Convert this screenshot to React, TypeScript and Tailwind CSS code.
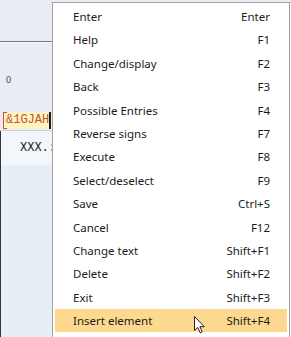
import React from "react";

const items: [string, string][] = [
  ["Enter", "Enter"],
  ["Help", "F1"],
  ["Change/display", "F2"],
  ["Back", "F3"],
  ["Possible Entries", "F4"],
  ["Reverse signs", "F7"],
  ["Execute", "F8"],
  ["Select/deselect", "F9"],
  ["Save", "Ctrl+S"],
  ["Cancel", "F12"],
  ["Change text", "Shift+F1"],
  ["Delete", "Shift+F2"],
  ["Exit", "Shift+F3"],
  ["Insert element", "Shift+F4"],
];

export default function App() {
  return (
    <div className="relative w-[291px] h-[337px] overflow-hidden bg-[#e9eef5]" style={{ fontFamily: '"Noto Sans", "Open Sans", sans-serif' }}>
      {/* left background content */}
      <div className="flex flex-col w-[53px] h-full">
        <div className="h-[41px] bg-[#e8edf4]" />
        <div className="h-px bg-[#737a82]" />
        <div className="h-px bg-[#f8fafc]" />
        <div className="h-[42px] flex items-end pl-[6px]">
          <span className="text-[9px] leading-[10px] text-[#444]">0</span>
        </div>
        <div className="h-[25px]" />
        <div className="relative h-[20px] flex items-center pl-[3px]">
          <div className="relative h-[17px] flex-1 bg-[#fff3c4] flex items-center pl-[3px] overflow-hidden">
            <div className="absolute left-0 top-0 bottom-0 w-px bg-[#d0503a]" />
            <div className="absolute left-0 top-0 w-[4px] h-px bg-[#d0503a]" />
            <div className="absolute left-0 bottom-0 w-[4px] h-px bg-[#d0503a]" />
            <span className="text-[12px] leading-[14px] text-[#c0562c] whitespace-nowrap" style={{ fontFamily: '"Liberation Mono", monospace' }}>&amp;1GJAH</span>
            <div className="absolute left-[46px] top-0 bottom-0 w-[2px] bg-[#1a1a2a]" />
          </div>
        </div>
        <div className="h-px bg-[#c9d1da]" />
        <div className="h-[34px] bg-[#f3f6fa] border-l border-[#2d3a45] flex items-center pl-[19px]">
          <span className="text-[12px] leading-[14px] text-[#222] whitespace-nowrap" style={{ fontFamily: '"Liberation Mono", monospace' }}>XXX.:</span>
        </div>
        <div className="flex-1 border-l border-[#2d3a45] bg-[#e8eef6]" />
      </div>

      {/* context menu */}
      <div className="absolute left-[52px] top-[2px] w-[239px] h-[360px] bg-white border border-[#a3a3a3] border-r-0">
        <div className="w-[237px] h-full border-r border-[#a3a3a3] pt-[2px] px-[2px]">
          {items.map(([label, key], i) => (
            <div
              key={label}
              className={`h-[23.4px] flex items-center justify-between pl-[18px] pr-[17px] text-[11.5px] text-[#1b1b1b] ${i === items.length - 1 ? "bg-[#fcd98e]" : ""}`}
            >
              <span>{label}</span>
              <span>{key}</span>
            </div>
          ))}
        </div>
      </div>

      {/* mouse pointer */}
      <svg className="absolute left-[194px] top-[316px]" width="12" height="18" viewBox="0 0 12 18">
        <path d="M0.5 0.5 L0.5 14.5 L3.8 11.4 L6.2 16.8 L8.2 15.9 L5.9 10.7 L10.3 10.7 Z" fill="#ffffff" stroke="#222" strokeWidth="1" strokeLinejoin="round" />
      </svg>
    </div>
  );
}
